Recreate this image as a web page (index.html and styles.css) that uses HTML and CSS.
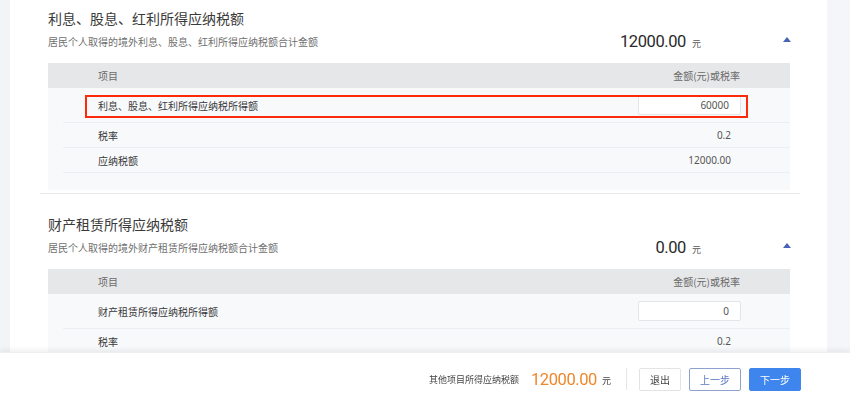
FILE: index.html
```html
<!DOCTYPE html>
<html lang="zh-CN">
<head>
<meta charset="utf-8">
<title>境外所得应纳税额</title>
<link rel="stylesheet" href="styles.css">
</head>
<body>
<div class="page">
  <div class="side side-left"></div>
  <main class="panel">
    <section class="block block-first">
      <div class="block-head">
        <div class="head-text">
          <h2 class="title">利息、股息、红利所得应纳税额</h2>
          <p class="desc">居民个人取得的境外利息、股息、红利所得应纳税额合计金额</p>
        </div>
        <div class="head-sum">
          <div class="sum"><span class="sum-num">12000.00</span><span class="sum-unit">元</span></div>
          <span class="toggle"><svg width="8" height="5" viewBox="0 0 8 5"><polygon points="0,5 4,0 8,5" fill="#4b63b6"/></svg></span>
        </div>
      </div>
      <div class="grid">
        <div class="grid-head"><span class="col-name">项目</span><span class="col-val">金额(元)或税率</span></div>
        <div class="grid-row row-input">
          <span class="col-name">利息、股息、红利所得应纳税所得额</span>
          <span class="input">60000</span>
          <span class="mark"></span>
        </div>
        <div class="grid-row"><span class="col-name">税率</span><span class="val">0.2</span></div>
        <div class="grid-row"><span class="col-name">应纳税额</span><span class="val">12000.00</span></div>
      </div>
    </section>
    <section class="block">
      <div class="block-head">
        <div class="head-text">
          <h2 class="title">财产租赁所得应纳税额</h2>
          <p class="desc">居民个人取得的境外财产租赁所得应纳税额合计金额</p>
        </div>
        <div class="head-sum">
          <div class="sum"><span class="sum-num">0.00</span><span class="sum-unit">元</span></div>
          <span class="toggle"><svg width="8" height="5" viewBox="0 0 8 5"><polygon points="0,5 4,0 8,5" fill="#4b63b6"/></svg></span>
        </div>
      </div>
      <div class="grid">
        <div class="grid-head"><span class="col-name">项目</span><span class="col-val">金额(元)或税率</span></div>
        <div class="grid-row row-input">
          <span class="col-name">财产租赁所得应纳税所得额</span>
          <span class="input">0</span>
        </div>
        <div class="grid-row"><span class="col-name">税率</span><span class="val">0.2</span></div>
        <div class="grid-row"><span class="col-name">应纳税额</span><span class="val">0.00</span></div>
      </div>
    </section>
  </main>
  <div class="side side-right"></div>
</div>
<footer class="bar">
  <span class="bar-label">其他项目所得应纳税额</span>
  <span class="bar-num">12000.00</span>
  <span class="bar-unit">元</span>
  <span class="bar-sep"></span>
  <button class="btn btn-plain">退出</button>
  <button class="btn btn-outline">上一步</button>
  <button class="btn btn-primary">下一步</button>
</footer>
</body>
</html>
```

FILE: styles.css
```css
* { box-sizing: border-box; }
html, body {
  margin: 0;
  padding: 0;
  height: 100%;
  overflow: hidden;
}
body {
  font-family: "Noto Sans CJK SC", "Noto Sans", sans-serif;
  color: #333;
  background: #f4f5f7;
}
.page {
  display: flex;
  width: 850px;
  min-height: 405px;
}
.side-left { width: 10px; background: #f3f4f6; flex: none; }
.side-right { flex: 1; background: #f5f6f9; }
.panel {
  width: 817px;
  flex: none;
  background: #fff;
  padding-left: 30px;
}
.block {
  width: 760px;
  padding: 19px 10px 3px 8px;
  border-bottom: 1px solid #e9eaec;
}
.block-first { padding-top: 7px; }
.block-head {
  display: flex;
  justify-content: space-between;
  align-items: flex-end;
  margin-bottom: 13px;
}
.title {
  margin: 0;
  font-size: 14px;
  line-height: 22px;
  font-weight: normal;
  color: #3a3a3a;
}
.desc {
  margin: 5px 0 0;
  font-size: 10px;
  line-height: 16px;
  color: #707070;
}
.head-sum {
  display: flex;
  align-items: center;
  margin-bottom: -3px;
}
.sum {
  display: flex;
  align-items: baseline;
}
.sum-num {
  font-family: "Roboto", "Noto Sans", sans-serif;
  font-size: 16.5px;
  letter-spacing: -0.4px;
  line-height: 22px;
  color: #2a2a2a;
}
.sum-unit {
  font-size: 9px;
  margin-left: 6px;
  color: #555;
}
.toggle {
  display: flex;
  margin-left: 82px;
  margin-right: -1px;
  margin-top: -6px;
}
.grid {
  background: #f8f9fb;
  padding-bottom: 17px;
  position: relative;
}
.grid-head {
  display: flex;
  justify-content: space-between;
  align-items: center;
  height: 25px;
  background: #e6e7e9;
  padding: 0 50px;
  font-size: 10px;
  color: #6a6a6a;
}
.grid-row {
  display: flex;
  justify-content: space-between;
  align-items: center;
  height: 25px;
  margin-left: 15px;
  padding: 0 59px 0 35px;
  border-bottom: 1px solid #eceef1;
  font-size: 10px;
  color: #3a3a3a;
  position: relative;
}
.grid-row .val { color: #555; font-family: "Noto Sans", sans-serif; }
.row-input {
  height: 35px;
  padding-right: 49px;
}
.input {
  width: 103px;
  height: 20px;
  background: #fff;
  border: 1px solid #e3e5e9;
  border-radius: 2px;
  text-align: right;
  padding-right: 11px;
  font-family: "Noto Sans", sans-serif;
  font-size: 10px;
  line-height: 18px;
  color: #555;
}
.mark {
  position: absolute;
  left: 22px;
  right: 42px;
  top: 7px;
  height: 23px;
  border: 2px solid #ff2a0a;
}
.bar {
  position: fixed;
  left: 0;
  bottom: 0;
  width: 850px;
  height: 53px;
  background: #fff;
  box-shadow: 0 -2px 5px rgba(0, 0, 0, 0.07);
  border-top: 1px solid #eceef0;
  display: flex;
  align-items: center;
  justify-content: flex-end;
  padding-right: 49px;
}
.bar-label {
  font-size: 9px;
  color: #444;
}
.bar-num {
  font-family: "Roboto", "Noto Sans", sans-serif;
  font-size: 16.5px;
  letter-spacing: -0.4px;
  color: #f0862a;
  margin-left: 12px;
}
.bar-unit {
  font-size: 9px;
  color: #444;
  margin-left: 5px;
  margin-top: 3px;
}
.bar-sep {
  width: 1px;
  height: 22px;
  background: #e4e5e7;
  margin: 0 12px 0 15px;
}
.btn {
  height: 23px;
  border-radius: 2px;
  font-family: "Noto Sans CJK SC", sans-serif;
  font-size: 10px;
  padding: 0;
  margin-left: 8px;
  cursor: pointer;
}
.btn-plain {
  width: 42px;
  margin-left: 0;
  background: #fff;
  border: 1px solid #e2e3e6;
  color: #444;
}
.btn-outline {
  width: 52px;
  background: #fff;
  border: 1px solid #8ea2cf;
  color: #5a78c2;
}
.btn-primary {
  width: 52px;
  background: #3e86ee;
  border: 1px solid #3e86ee;
  color: #fff;
}
```
